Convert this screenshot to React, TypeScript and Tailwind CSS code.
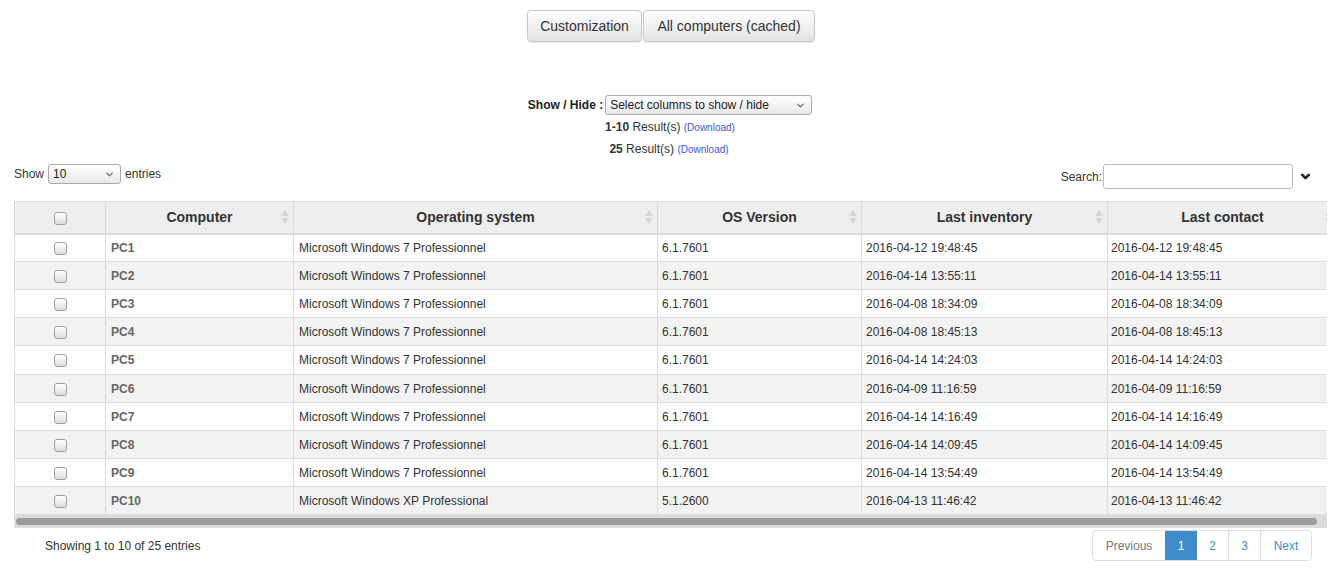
import { ChevronDown } from "lucide-react";

const rows = [
  ["PC1", "Microsoft Windows 7 Professionnel", "6.1.7601", "2016-04-12 19:48:45", "2016-04-12 19:48:45"],
  ["PC2", "Microsoft Windows 7 Professionnel", "6.1.7601", "2016-04-14 13:55:11", "2016-04-14 13:55:11"],
  ["PC3", "Microsoft Windows 7 Professionnel", "6.1.7601", "2016-04-08 18:34:09", "2016-04-08 18:34:09"],
  ["PC4", "Microsoft Windows 7 Professionnel", "6.1.7601", "2016-04-08 18:45:13", "2016-04-08 18:45:13"],
  ["PC5", "Microsoft Windows 7 Professionnel", "6.1.7601", "2016-04-14 14:24:03", "2016-04-14 14:24:03"],
  ["PC6", "Microsoft Windows 7 Professionnel", "6.1.7601", "2016-04-09 11:16:59", "2016-04-09 11:16:59"],
  ["PC7", "Microsoft Windows 7 Professionnel", "6.1.7601", "2016-04-14 14:16:49", "2016-04-14 14:16:49"],
  ["PC8", "Microsoft Windows 7 Professionnel", "6.1.7601", "2016-04-14 14:09:45", "2016-04-14 14:09:45"],
  ["PC9", "Microsoft Windows 7 Professionnel", "6.1.7601", "2016-04-14 13:54:49", "2016-04-14 13:54:49"],
  ["PC10", "Microsoft Windows XP Professional", "5.1.2600", "2016-04-13 11:46:42", "2016-04-13 11:46:42"],
];

const cols = [
  { label: "Computer", w: "w-[188px]" },
  { label: "Operating system", w: "w-[364px]" },
  { label: "OS Version", w: "w-[204px]" },
  { label: "Last inventory", w: "w-[246px]" },
  { label: "Last contact", w: "w-[230px]" },
];

function Box() {
  return <span className="inline-block w-[13px] h-[13px] rounded-[3px] border border-[#a0a0a0] bg-gradient-to-b from-white to-[#dcdcdc] align-middle" />;
}

function SortIcon() {
  return (
    <span className="absolute right-[4px] top-1/2 -translate-y-1/2 flex flex-col gap-[2px]">
      <span className="block w-0 h-0 border-l-[4px] border-r-[4px] border-b-[6px] border-l-transparent border-r-transparent border-b-[#d6d6d6]" />
      <span className="block w-0 h-0 border-l-[4px] border-r-[4px] border-t-[6px] border-l-transparent border-r-transparent border-t-[#d6d6d6]" />
    </span>
  );
}

function Select({ text, w }: { text: string; w: string }) {
  return (
    <div className={`${w} h-[20px] border border-[#aaa] rounded-[3px] bg-gradient-to-b from-white to-[#e8e8e8] flex items-center justify-between pl-[4px] pr-[5px] text-[12px] text-[#222]`}>
      <span>{text}</span>
      <ChevronDown className="w-[11px] h-[11px] text-[#666]" strokeWidth={2.5} />
    </div>
  );
}

export default function App() {
  const btn = "h-[32px] px-[12px] text-[14px] text-[#333] border border-[#c8c8c8] rounded-[4px] bg-gradient-to-b from-white to-[#e2e2e2] shadow-[0_1px_1px_rgba(0,0,0,0.08)]";
  return (
    <div className="w-[1338px] h-[569px] bg-white text-[#333] overflow-hidden" style={{ fontFamily: '"Liberation Sans", Arial, sans-serif' }}>
      <div className="flex justify-center pt-[10px] pl-[4px] gap-px">
        <button className={`${btn} w-[115px]`}>Customization</button>
        <button className={`${btn} w-[172px]`}>All computers (cached)</button>
      </div>

      <div className="flex justify-center items-center mt-[53px] pl-[2px] gap-[2px] text-[12px]">
        <span className="font-bold text-[#222]">Show / Hide :</span>
        <Select text="Select columns to show / hide" w="w-[207px]" />
      </div>
      <div className="h-[22px] mt-[1px] flex items-center justify-center text-[12px] pl-[2px]">
        <b>1-10</b>&nbsp;Result(s)&nbsp;<span className="text-[10px] text-[#3b55d9]">(Download)</span>
      </div>
      <div className="h-[22px] flex items-center justify-center text-[12px]">
        <b>25</b>&nbsp;Result(s)&nbsp;<span className="text-[10px] text-[#3b55d9]">(Download)</span>
      </div>

      <div className="flex items-start justify-between mt-[3px] pl-[14px] pr-[26px] text-[12px]">
        <div className="flex items-center gap-[4px] h-[20px] mt-[1px]">
          <span>Show</span>
          <Select text="10" w="w-[73px]" />
          <span>entries</span>
        </div>
        <div className="flex items-center h-[25px] mt-[1px]">
          <span>Search:</span>
          <input className="ml-px w-[190px] h-[25px] border border-[#bbb] rounded-[3px] bg-white outline-none" />
          <ChevronDown className="ml-[6px] w-[13px] h-[13px] text-[#222]" strokeWidth={5} />
        </div>
      </div>

      <div className="mx-[14px] mt-[12px] w-[1313px] overflow-hidden">
        <table className="table-fixed border-collapse w-[1323px] text-[12px]">
          <thead>
            <tr className="bg-[#eeeeee]">
              <th className="w-[91px] h-[32px] border border-[#dcdcdc] border-b-2 text-center">
                <Box />
              </th>
              {cols.map((c) => (
                <th key={c.label} className={`${c.w} h-[32px] border border-[#dcdcdc] border-b-2 relative text-[14px] font-bold text-[#333] text-center`}>
                  {c.label}
                  <SortIcon />
                </th>
              ))}
            </tr>
          </thead>
          <tbody>
            {rows.map((r, i) => (
              <tr key={r[0]} className={i % 2 === 0 ? "bg-[#fdfdfd]" : "bg-[#f2f2f2]"}>
                <td className={`${i === 4 ? "h-[29px]" : "h-[28px]"} border border-[#dcdcdc] text-center p-0`}>
                  <Box />
                </td>
                <td className="border border-[#dcdcdc] px-[5px] font-bold text-[#666]">{r[0]}</td>
                <td className="border border-[#dcdcdc] px-[5px] text-[#333]">{r[1]}</td>
                <td className="border border-[#dcdcdc] px-[4px] text-[#333]">{r[2]}</td>
                <td className="border border-[#dcdcdc] px-[4px] text-[#333]">{r[3]}</td>
                <td className="border border-[#dcdcdc] px-[3px] text-[#333]">{r[4]}</td>
              </tr>
            ))}
          </tbody>
        </table>
        <div className="h-[13px] bg-[#dcdcdc] flex items-center px-[2px]">
          <div className="h-[7px] w-[1301px] rounded-full bg-[#9b9b9b]" />
        </div>
      </div>

      <div className="flex items-start justify-between pl-[45px] pr-[26px] mt-[2px] text-[12px]">
        <div className="mt-[7px]">Showing 1 to 10 of 25 entries</div>
        <div className="flex h-[31px] border border-[#ddd] rounded-[4px] overflow-hidden">
          <span className="w-[72px] flex items-center justify-center text-[#777]">Previous</span>
          <span className="w-[32px] flex items-center justify-center bg-[#428bca] text-white">1</span>
          <span className="w-[32px] flex items-center justify-center text-[#428bca] border-r border-[#ddd]">2</span>
          <span className="w-[32px] flex items-center justify-center text-[#428bca] border-r border-[#ddd]">3</span>
          <span className="w-[50px] flex items-center justify-center text-[#428bca]">Next</span>
        </div>
      </div>
    </div>
  );
}
